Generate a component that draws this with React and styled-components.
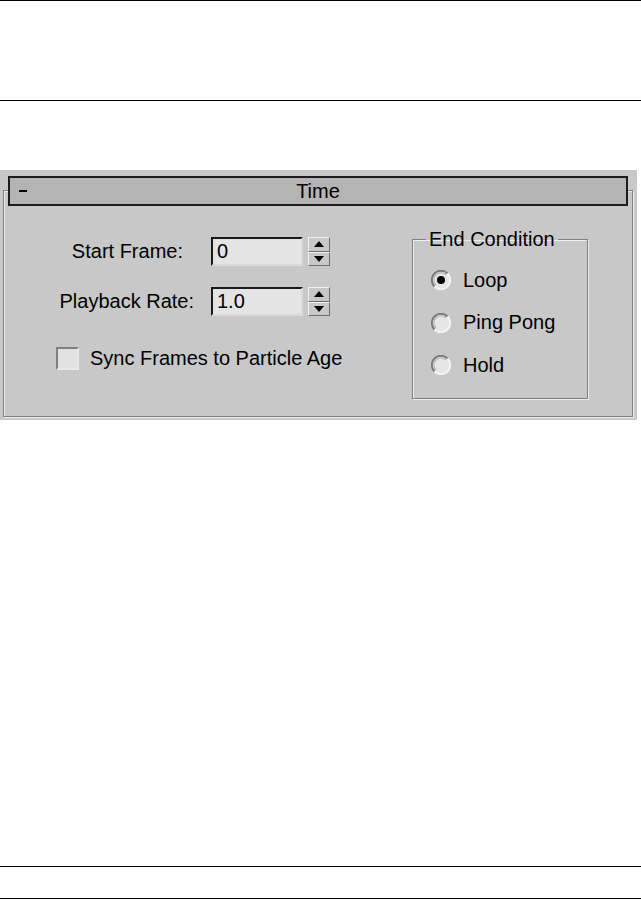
import styled, { createGlobalStyle } from "styled-components";

const Global = createGlobalStyle`
  html, body {
    margin: 0;
    padding: 0;
    background: #fff;
  }
  body {
    font-family: "Liberation Sans", Arial, sans-serif;
    color: #000;
  }
`

const Page = styled.div`
  width: 641px;
  height: 900px;
  overflow: hidden;
`

const Band = styled.div`
  height: ${(p) => p.$h}px;
  margin-top: ${(p) => p.$top || 0}px;
  border-top: 1px solid #000;
  border-bottom: 1px solid #000;
`

const Panel = styled.div`
  width: 637px;
  height: 250px;
  margin-top: 69px;
  padding: 20px 0 0 3px;
  box-sizing: border-box;
  background: #c8c8c8;
`

const Rollout = styled.div`
  width: 630px;
  height: 227px;
  box-sizing: border-box;
  border: 1px solid #808080;
  box-shadow: inset 1px 1px 0 #eeeeee, 1px 1px 0 #eeeeee;
`

const TitleBar = styled.div`
  display: grid;
  grid-template-columns: 1fr auto 1fr;
  align-items: center;
  height: 30px;
  margin: -15px 4px 0 4px;
  box-sizing: border-box;
  border: 2px solid #1c1c1c;
  background: #b4b4b4;
  font-size: 20px;
  line-height: 26px;
`

const Minus = styled.span`
  display: block;
  width: 8px;
  height: 2px;
  margin-left: 9px;
  background: #000;
`

const Body = styled.div`
  display: flex;
  align-items: flex-start;
`

const LeftCol = styled.div`
  width: 326px;
  padding-top: 31px;
  display: flex;
  flex-direction: column;
`

const FieldRow = styled.div`
  display: flex;
  align-items: center;
  height: 29px;
  margin-bottom: 21px;
`

const Label = styled.label`
  width: 207px;
  box-sizing: border-box;
  padding-right: ${(p) => p.$gap}px;
  text-align: right;
  font-size: 20px;
  white-space: nowrap;
`

const Input = styled.div`
  width: 92px;
  height: 29px;
  box-sizing: border-box;
  border-top: 2px solid #1a1a1a;
  border-left: 2px solid #1a1a1a;
  border-right: 2px solid #dadada;
  border-bottom: 2px solid #dadada;
  background: #e4e4e4;
  padding-left: 4px;
  font-size: 20px;
  line-height: 25px;
`

const Spinner = styled.div`
  display: flex;
  flex-direction: column;
  margin-left: 5px;
  width: 22px;
  height: 29px;
`

const SpinBtn = styled.div`
  flex: 1;
  display: flex;
  align-items: center;
  justify-content: center;
  box-sizing: border-box;
  background: #c8c8c8;
  border-top: 1px solid #f2f2f2;
  border-left: 1px solid #f2f2f2;
  border-right: 1px solid #6e6e6e;
  border-bottom: 1px solid #6e6e6e;
`

const CheckRow = styled.div`
  display: flex;
  align-items: center;
  padding-left: 52px;
  margin-top: 10px;
  font-size: 20px;
  white-space: nowrap;
`

const CheckBox = styled.div`
  flex: none;
  width: 23px;
  height: 23px;
  box-sizing: border-box;
  border-top: 2px solid #808080;
  border-left: 2px solid #808080;
  border-right: 2px solid #e8e8e8;
  border-bottom: 2px solid #e8e8e8;
  background: #e2e2e2;
  margin-right: 11px;
`

const Group = styled.fieldset`
  margin: 22px 0 0 82px;
  padding: 0;
  width: 176px;
  height: 171px;
  box-sizing: border-box;
  border: 1px solid #808080;
  box-shadow: inset 1px 1px 0 #eeeeee, 1px 1px 0 #eeeeee;
`

const Legend = styled.legend`
  margin-left: 13px;
  padding: 0 3px;
  font-size: 20px;
  line-height: 23px;
`

const RadioList = styled.div`
  display: flex;
  flex-direction: column;
  gap: 12.5px;
  padding: 14px 0 0 18px;
`

const RadioRow = styled.div`
  display: flex;
  align-items: center;
  height: 30px;
  font-size: 20px;
`

const RadioText = styled.span`
  margin-left: 12px;
`

function Arrow({ up }) {
  return (
    <svg width="10" height="6" viewBox="0 0 10 6">
      <polygon points={up ? "5,0 10,6 0,6" : "0,0 10,0 5,6"} fill="#000" />
    </svg>
  );
}

function RadioDot({ checked }) {
  return (
    <svg width="20" height="20" viewBox="0 0 20 20">
      <circle cx="10" cy="10" r="8.5" fill="#e6e6e6" />
      <path d="M3.5 16.5 A9 9 0 0 1 16.5 3.5" fill="none" stroke="#7a7a7a" strokeWidth="2" />
      <path d="M5 15 A7 7 0 0 1 15 5" fill="none" stroke="#b8b8b8" strokeWidth="1.2" />
      <path d="M16.5 3.5 A9 9 0 0 1 3.5 16.5" fill="none" stroke="#f4f4f4" strokeWidth="2" />
      {checked && <circle cx="10" cy="10" r="4" fill="#000" />}
    </svg>
  );
}

const fields = [
  { label: 'Start Frame:', value: '0', gap: 28 },
  { label: 'Playback Rate:', value: '1.0', gap: 17 },
]

const conditions = [
  { text: 'Loop', checked: true },
  { text: 'Ping Pong', checked: false },
  { text: 'Hold', checked: false },
]

export default function App() {
  return (
    <Page>
      <Global />
      <Band $h={99} />
      <Panel>
        <Rollout>
          <TitleBar>
            <Minus />
            <span>Time</span>
            <span />
          </TitleBar>
          <Body>
            <LeftCol>
              {fields.map((f) => (
                <FieldRow key={f.label}>
                  <Label $gap={f.gap}>{f.label}</Label>
                  <Input>{f.value}</Input>
                  <Spinner>
                    <SpinBtn><Arrow up /></SpinBtn>
                    <SpinBtn><Arrow /></SpinBtn>
                  </Spinner>
                </FieldRow>
              ))}
              <CheckRow>
                <CheckBox />
                <span>Sync Frames to Particle Age</span>
              </CheckRow>
            </LeftCol>
            <Group>
              <Legend>End Condition</Legend>
              <RadioList>
                {conditions.map((c) => (
                  <RadioRow key={c.text}>
                    <RadioDot checked={c.checked} />
                    <RadioText>{c.text}</RadioText>
                  </RadioRow>
                ))}
              </RadioList>
            </Group>
          </Body>
        </Rollout>
      </Panel>
      <Band $h={31} $top={446} />
    </Page>
  );
}
